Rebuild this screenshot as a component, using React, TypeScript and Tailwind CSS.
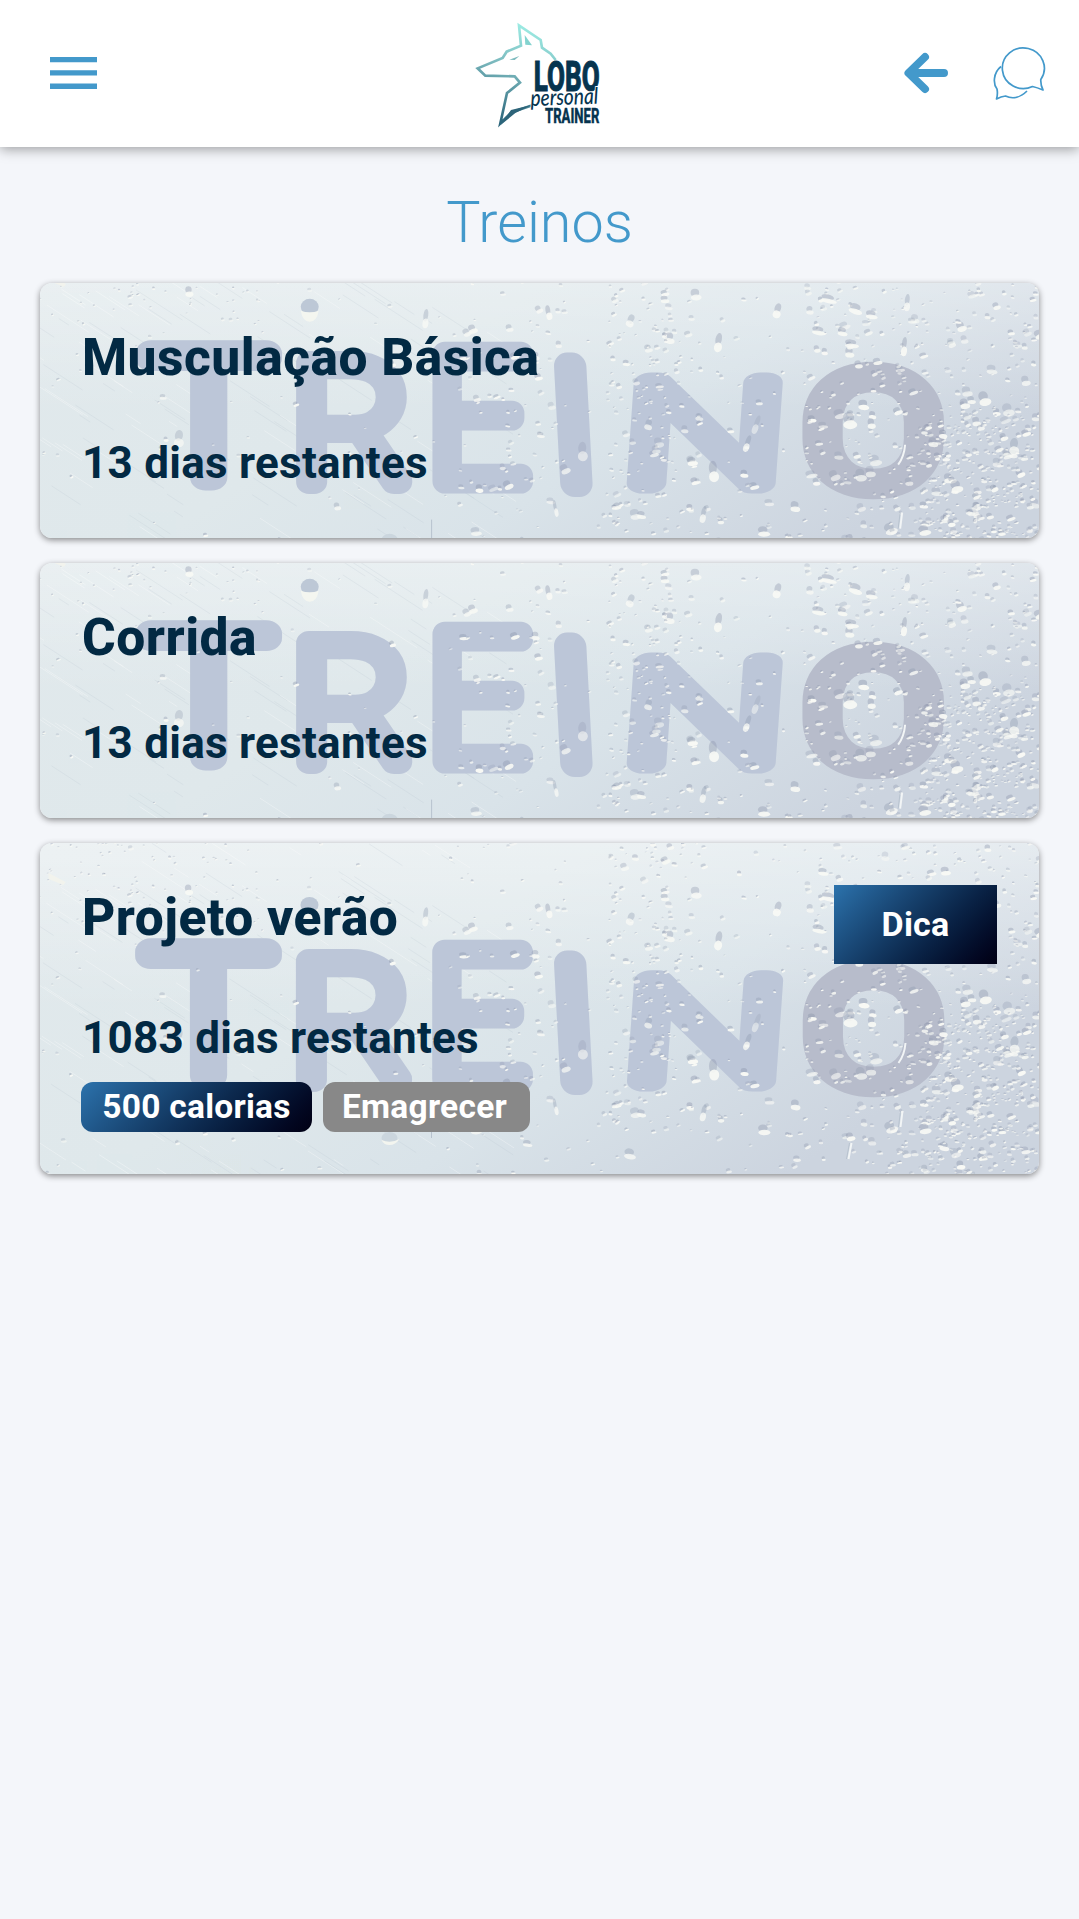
import type { ReactNode } from 'react';

interface Training {
  id: number;
  name: string;
  remainingDays: number;
  tip?: boolean;
  tags?: string[];
}

interface Drop {
  x: number;
  y: number;
  width: number;
  height: number;
  angle: number;
  light: number;
}

const trainings: Training[] = [
  { id: 1, name: 'Musculação Básica', remainingDays: 13 },
  { id: 2, name: 'Corrida', remainingDays: 13 },
  {
    id: 3,
    name: 'Projeto verão',
    remainingDays: 1083,
    tip: true,
    tags: ['500 calorias', 'Emagrecer'],
  },
];

// Letters written on the wet glass: centre x, baseline, font size, x scale, skew and stroke
const glassLetters = [
  { char: 'T', x: 169, y: 233, size: 175, scale: 1.21, skew: 0, stroke: 29 },
  { char: 'R', x: 312, y: 237, size: 167, scale: 1.1, skew: 0, stroke: 25 },
  { char: 'E', x: 438, y: 236, size: 179, scale: 0.98, skew: 0, stroke: 25 },
  { char: 'I', x: 537, y: 238, size: 164, scale: 1, skew: 3, stroke: 28 },
  { char: 'N', x: 662, y: 238, size: 141, scale: 1.6, skew: -4, stroke: 28 },
  { char: 'O', x: 834, y: 240, size: 152, scale: 1.31, skew: 0, stroke: 31 },
];

function createRandom(start: number) {
  let seed = start;

  return () => {
    seed = (seed * 16807) % 2147483647;
    return seed / 2147483647;
  };
}

function createDrops(): Drop[] {
  const random = createRandom(91);

  const clusters = [
    { x: 0, width: 420, y: 0, height: 331, count: 70, max: 2 },
    { x: 0, width: 220, y: 0, height: 80, count: 80, max: 0.5 },
    { x: 420, width: 100, y: 0, height: 331, count: 90, max: 3.6 },
    { x: 520, width: 60, y: 0, height: 331, count: 22, max: 3 },
    { x: 570, width: 90, y: 0, height: 290, count: 190, max: 3.4 },
    { x: 660, width: 110, y: 0, height: 331, count: 60, max: 3.4 },
    { x: 765, width: 100, y: 0, height: 331, count: 170, max: 4 },
    { x: 850, width: 150, y: 0, height: 331, count: 330, max: 3.6 },
    { x: 880, width: 120, y: 170, height: 161, count: 240, max: 2.6 },
  ];

  return clusters.flatMap((cluster) =>
    Array.from({ length: cluster.count }, () => {
      const size = 1 + random() * random() * cluster.max;

      return {
        x: cluster.x + random() * cluster.width,
        y: cluster.y + random() * cluster.height,
        width: size * 1.3,
        height: size * (0.8 + random() * 0.6),
        angle: -25 + random() * 35,
        light: 0.5 + random() * 0.5,
      };
    }),
  );
}

function createStreaks() {
  const random = createRandom(37);

  return Array.from({ length: 150 }, () => ({
    x: random() * 470 - 20,
    y: random() * 331,
    length: 8 + random() * 40,
    light: random() > 0.5,
  }));
}

const streaks = createStreaks();

const drops: Drop[] = [
  ...createDrops(),
  { x: 386, y: 74, width: 3, height: 9, angle: 8, light: 0.8 },
  { x: 509, y: 68, width: 3, height: 7, angle: -8, light: 0.9 },
  { x: 591, y: 76, width: 4, height: 6, angle: 25, light: 0.8 },
  { x: 679, y: 98, width: 4, height: 9, angle: 12, light: 0.9 },
  { x: 738, y: 66, width: 4, height: 7, angle: 20, light: 0.9 },
  { x: 868, y: 58, width: 3, height: 8, angle: 8, light: 0.8 },
  { x: 865, y: 102, width: 3, height: 9, angle: 8, light: 0.9 },
  { x: 779, y: 86, width: 7, height: 4, angle: 10, light: 0.9 },
  { x: 803, y: 87, width: 5, height: 4, angle: 10, light: 0.9 },
  { x: 812, y: 99, width: 7, height: 4, angle: 5, light: 0.9 },
  { x: 789, y: 54, width: 8, height: 4, angle: 12, light: 0.9 },
  { x: 816, y: 64, width: 7, height: 5, angle: 18, light: 0.9 },
  { x: 832, y: 70, width: 6, height: 4, angle: 8, light: 0.9 },
  { x: 945, y: 154, width: 6, height: 7, angle: -8, light: 0.9 },
  { x: 810, y: 176, width: 7, height: 8, angle: 0, light: 0.9 },
  { x: 832, y: 179, width: 4, height: 5, angle: 0, light: 0.9 },
  { x: 543, y: 207, width: 5, height: 9, angle: 4, light: 0.6 },
  { x: 674, y: 227, width: 5, height: 10, angle: 0, light: 0.9 },
  { x: 717, y: 180, width: 3, height: 9, angle: 22, light: 0.5 },
  { x: 708, y: 199, width: 3, height: 8, angle: 22, light: 0.8 },
  { x: 609, y: 180, width: 4, height: 5, angle: 20, light: 0.7 },
  { x: 917, y: 242, width: 6, height: 6, angle: -8, light: 0.9 },
  { x: 975, y: 202, width: 5, height: 8, angle: 8, light: 0.8 },
  { x: 139, y: 194, width: 5, height: 8, angle: 10, light: 0.7 },
  { x: 149, y: 47, width: 4, height: 5, angle: 0, light: 0.9 },
  { x: 664, y: 270, width: 3, height: 8, angle: 15, light: 0.8 },
  { x: 516, y: 264, width: 2, height: 8, angle: -10, light: 0.8 },
  { x: 885, y: 286, width: 6, height: 5, angle: -8, light: 0.9 },
  { x: 724, y: 287, width: 6, height: 5, angle: 0, light: 0.9 },
  { x: 590, y: 311, width: 6, height: 5, angle: 10, light: 0.8 },
];

function GlassBackground({ id }: { id: number }) {
  return (
    <svg
      aria-hidden="true"
      viewBox="0 0 1000 331"
      preserveAspectRatio="xMidYMid slice"
      className="absolute inset-0 h-full w-full"
    >
      <defs>
        <linearGradient id={`glass-${id}`} x1="0" y1="0" x2="1" y2="0.5">
          <stop offset="0" stopColor="#e1e9ec" />
          <stop offset="0.45" stopColor="#dfe8eb" />
          <stop offset="0.7" stopColor="#d9e3e9" />
          <stop offset="1" stopColor="#ccd4df" />
        </linearGradient>
        <linearGradient id={`shine-${id}`} x1="0" y1="0" x2="0" y2="1">
          <stop offset="0" stopColor="#fff" stopOpacity="0.4" />
          <stop offset="0.5" stopColor="#fff" stopOpacity="0" />
        </linearGradient>
      </defs>

      <rect width="1000" height="331" fill={`url(#glass-${id})`} />
      <rect width="1000" height="331" fill={`url(#shine-${id})`} />

      {streaks.map((streak, index) => (
        <path
          key={index}
          d={`M${streak.x} ${streak.y}l${streak.length} ${streak.length * 0.65}`}
          stroke={streak.light ? '#ffffff' : '#b3c0cd'}
          opacity={streak.light ? 0.3 : 0.18}
        />
      ))}

      <g
        className="font-['Roboto',sans-serif] font-thin"
        textAnchor="middle"
        strokeLinejoin="round"
        strokeLinecap="round"
      >
        {glassLetters.map((letter) => {
          const color = letter.char === 'O' ? '#b7bccb' : '#bcc6d8';

          return (
            <text
              key={letter.char}
              fontSize={letter.size}
              fill={color}
              stroke={color}
              strokeWidth={letter.stroke}
              vectorEffect="non-scaling-stroke"
              transform={`translate(${letter.x} ${letter.y}) skewX(${letter.skew}) scale(${letter.scale} 1)`}
            >
              {letter.char}
            </text>
          );
        })}
      </g>

      {drops.map((drop, index) => (
        <g
          key={index}
          transform={`translate(${drop.x} ${drop.y}) rotate(${drop.angle})`}
        >
          <ellipse
            cx={drop.width * -0.1}
            cy={drop.height * -0.4}
            rx={drop.width * 0.8}
            ry={drop.height * 0.7}
            fill="#8a94aa"
            opacity={drop.light * 0.4}
          />
          <ellipse
            cx={drop.width * 0.15}
            cy={drop.height * 0.5}
            rx={drop.width}
            ry={drop.height * 0.55}
            fill="#f8f9f5"
            opacity={drop.light}
          />
        </g>
      ))}

      <ellipse cx="270" cy="62" rx="9" ry="8" fill="#bdc8d6" />
      <path d="M261 66q9 3 18 0q-2 11 -9 11t-9-11Z" fill="#f4f6f0" />
      <path d="M9 30l17 9l-2 3l-15-6Z" fill="#f2f3ed" />
      <ellipse cx="350" cy="295" rx="8" ry="6" fill="#cbd6de" />
      <path d="M342 297q9 4 18-1q-4 6-10 6t-8-5Z" fill="#f3f5ef" />
      <path d="M392 275v20M861 268l-2 16M810 300l-3 16" stroke="#b8c3cf" />
      <path
        d="M863 268l-2 16M812 300l-3 16M866 200q-1 12-7 20"
        stroke="#f2f5f6"
        strokeWidth="2"
        fill="none"
      />
    </svg>
  );
}

function Logo() {
  return (
    <svg
      viewBox="0 0 480 390"
      className="mt-[5px] h-[130px] w-[160px] overflow-visible"
    >
      <defs>
        <linearGradient id="wolf" x1="0.6" y1="0" x2="0.35" y2="1">
          <stop offset="0" stopColor="#9cebe3" />
          <stop offset="0.45" stopColor="#7ab8bd" />
          <stop offset="1" stopColor="#2b657b" />
        </linearGradient>
      </defs>
      <path
        d="M287 150L272 131L246 113L242 90L177 46L183 107L140 125L128 144L53 175L76 197L164 199L180 218L141 249L121 340L155 307L217 286"
        fill="none"
        stroke="url(#wolf)"
        strokeWidth="8"
      />
      <path d="M194 75L216 106L196 104Z" fill="#83d3cf" />
      <path d="M148 149L178 138L164 150Z" fill="#7cbabe" />
      <path d="M121 346L153 300L217 284L166 309Z" fill="#2d6479" />
      <g className="font-['Roboto',sans-serif] font-extrabold" fill="#06344f">
        <text
          x="221"
          y="243"
          fontSize="126"
          textLength="198"
          lengthAdjust="spacingAndGlyphs"
          stroke="#06344f"
          strokeWidth="3"
        >
          LOBO
        </text>
        <text
          x="255"
          y="338"
          fontSize="60"
          textLength="163"
          lengthAdjust="spacingAndGlyphs"
          stroke="#06344f"
          strokeWidth="1"
        >
          TRAINER
        </text>
      </g>
      <text
        x="212"
        y="288"
        fontSize="68"
        textLength="203"
        lengthAdjust="spacingAndGlyphs"
        fill="#06344f"
        stroke="#fff"
        strokeWidth="5"
        paintOrder="stroke"
        transform="rotate(-2 212 288)"
        className="font-['Lato',sans-serif] font-medium italic"
      >
        personal
      </text>
    </svg>
  );
}

function Header() {
  return (
    <header className="relative grid h-[147px] grid-cols-3 items-center bg-white pr-[34px] pb-[2px] pl-[50px] text-[#4399cb] shadow-[0_2px_12px_rgba(0,0,0,0.38)]">
      <button type="button" aria-label="Menu" className="w-[47px]">
        <svg viewBox="0 0 47 32" className="h-8 w-[47px]" fill="currentColor">
          <path d="M0 0h47v5.3H0ZM0 13.3h47v5.3H0ZM0 26.6h47v5.3H0Z" />
        </svg>
      </button>

      <div className="-ml-3.5 flex justify-center">
        <Logo />
      </div>

      <div className="flex items-center justify-end gap-[45px]">
        <button type="button" aria-label="Voltar">
          <svg
            viewBox="0 0 44 42"
            className="h-[42px] w-11"
            fill="none"
            stroke="currentColor"
            strokeWidth="8"
            strokeLinecap="round"
            strokeLinejoin="round"
          >
            <path d="M21 5L4.500 21L21 37M5 21H40" />
          </svg>
        </button>
        <button type="button" aria-label="Mensagens" className="mt-[2px]">
          <svg
            viewBox="0 0 52 52"
            className="h-[52px] w-[52px] overflow-visible"
            fill="none"
            stroke="currentColor"
            strokeWidth="1.7"
            strokeLinejoin="round"
          >
            <path d="M47.800 31.500A21 20.300 0 1 0 39.500 38.500Q44 39.500 50 42Q47.500 37 47.800 31.500Z" />
            <path d="M8 18.500C0 25 0 36 4 41Q5 46 3.500 51Q8 48.500 12.500 48C20 51.500 28 49 34 43" />
          </svg>
        </button>
      </div>
    </header>
  );
}

function Tag({ children, active }: { children: ReactNode; active: boolean }) {
  return (
    <span
      className={
        active
          ? 'flex h-[50px] w-[231px] items-center justify-center rounded-xl bg-linear-135 from-[#2c73ad] to-[#010113]'
          : 'flex h-[50px] w-[207px] items-center justify-center rounded-xl bg-[#888888] pr-1'
      }
    >
      {children}
    </span>
  );
}

function TrainingCard({ training }: { training: Training }) {
  return (
    <article className="relative overflow-hidden rounded-xl shadow-[0_2px_6px_rgba(0,0,0,0.45)]">
      <GlassBackground id={training.id} />

      <div
        className={
          training.tip
            ? 'relative h-[331px] px-[42px] pt-[42px]'
            : 'relative h-[254.5px] px-[42px] pt-[42px]'
        }
      >
        <div className="flex items-start justify-between">
          <h2 className="mt-px text-[51.5px] leading-[64px] font-extrabold tracking-[0.5px]">
            {training.name}
          </h2>
          {training.tip && (
            <button
              type="button"
              className="h-[79px] w-[163px] bg-linear-135 from-[#2c73ad] to-[#010113] text-[34px] font-bold tracking-[0.2px] text-white"
            >
              Dica
            </button>
          )}
        </div>

        <p
          className={
            training.tip
              ? 'mt-[46px] text-[44px] leading-[56px] font-bold tracking-[0.27px]'
              : 'mt-[45px] text-[44px] leading-[56px] font-bold tracking-[0.27px]'
          }
        >
          {training.remainingDays} dias restantes
        </p>

        {training.tags && (
          <div className="-ml-px mt-[16px] flex gap-[11px] text-[33.5px] font-bold tracking-[0.25px] text-white">
            {training.tags.map((tag, index) => (
              <Tag key={tag} active={index === 0}>
                {tag}
              </Tag>
            ))}
          </div>
        )}
      </div>
    </article>
  );
}

export default function App() {
  return (
    <div className="min-h-screen bg-[#f4f6fa] font-['Roboto',sans-serif] text-[#022943]">
      <Header />

      <main className="px-[40px] pt-[42px]">
        <h1 className="text-center text-[57.5px] leading-[68px] font-light text-[#4399cb]">
          Treinos
        </h1>

        <div className="mt-[26px] flex flex-col gap-[25.5px]">
          {trainings.map((training) => (
            <TrainingCard key={training.id} training={training} />
          ))}
        </div>
      </main>
    </div>
  );
}
